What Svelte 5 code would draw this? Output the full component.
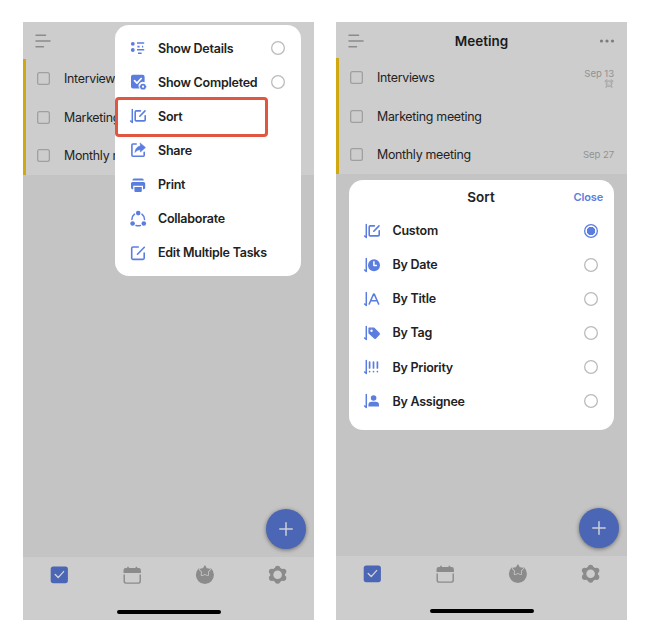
<script>
  const menu = [
    { icon: 'details', label: 'Show Details', radio: true },
    { icon: 'completed', label: 'Show Completed', radio: true },
    { icon: 'custom', label: 'Sort' },
    { icon: 'share', label: 'Share' },
    { icon: 'print', label: 'Print' },
    { icon: 'collab', label: 'Collaborate' },
    { icon: 'edit', label: 'Edit Multiple Tasks' }
  ];
  const sorts = [
    { icon: 'custom', label: 'Custom', on: true },
    { icon: 'date', label: 'By Date' },
    { icon: 'title', label: 'By Title' },
    { icon: 'tag', label: 'By Tag' },
    { icon: 'priority', label: 'By Priority' },
    { icon: 'assignee', label: 'By Assignee' }
  ];
  const tasks = [
    { name: 'Interviews', date: 'Sep 13', alarm: true },
    { name: 'Marketing meeting' },
    { name: 'Monthly meeting', date: 'Sep 27' }
  ];
  const sortIcons = ['custom', 'date', 'title', 'tag', 'priority', 'assignee'];
  const star = 'M9.900 1l1.500 2.700 3.100.6-2.200 2.200.4 3.100-2.800-1.200-2.800 1.200.4-3.100-2.200-2.200 3.100-.6z';
</script>

{#snippet glyph(name)}
  <svg class="glyph" viewBox="0 0 20 20" width="20" height="20" fill="none" stroke="currentColor" stroke-width="1.6" stroke-linecap="round" stroke-linejoin="round">
    {#if sortIcons.includes(name)}
      <path d="M4.300 3.600V16.400L2.600 15" stroke-width="1.500" />
    {/if}
    {#if name === 'details'}
      <g fill="currentColor" stroke="none"><circle cx="4.8" cy="5.800" r="1.900" /><circle cx="4.8" cy="12" r="1.900" /></g>
      <path d="M9 5h7.200M9.400 8.600h2.200M14 8.600h1.200M9 11.800h7.200M10 15.200h3.600" stroke-width="1.600" stroke-linecap="butt" />
    {:else if name === 'completed'}
      <path d="M5 2.700h9.600a2 2 0 0 1 2 2v5.600a4 4 0 0 0-5 6.100H5a2 2 0 0 1-2-2V4.700a2 2 0 0 1 2-2z" fill="currentColor" stroke="none" />
      <path d="M6.500 8.700l2.400 2.400 4.300-4.600" stroke="#fff" stroke-width="1.700" />
      <circle cx="15" cy="14.700" r="2" stroke-width="1.700" />
      <path d="M12.200 14.700h.5M17.300 14.700h.5" stroke-width="1.400" />
    {:else if name === 'custom'}
      <path d="M12.400 4.900H8.200a1 1 0 0 0-1 1v8a1 1 0 0 0 1 1h8a1 1 0 0 0 1-1V9.800M11.800 10.200L17 4.900" stroke-width="1.600" />
    {:else if name === 'date'}
      <circle cx="12" cy="10.200" r="6" fill="currentColor" stroke="none" />
      <path d="M11.900 6.800v3.800h2.500" stroke="#fff" stroke-width="1.500" />
    {:else if name === 'title'}
      <path d="M7.200 15L11.600 5h.6L16.600 15M8.800 11.800h6.200" stroke-width="1.600" />
    {:else if name === 'tag'}
      <path d="M7 5.200h5l5.200 5.200a.6.6 0 0 1 0 .9l-3.600 3.900a.6.6 0 0 1-.9 0L7 10z" fill="currentColor" stroke-width="1.200" />
      <circle cx="9.500" cy="7.800" r="1.200" fill="#fff" stroke="none" />
    {:else if name === 'priority'}
      <path d="M7.600 5v6M11.500 5v6M15.400 5v6M7.600 14.600h0M11.500 14.600h0M15.400 14.600h0" stroke-width="1.700" />
    {:else if name === 'assignee'}
      <g fill="currentColor" stroke="none"><circle cx="11.600" cy="7" r="2.800" /><path d="M6.400 15.600v-1.500a3.300 3.300 0 0 1 3.300-3.300h4a3.300 3.300 0 0 1 3.300 3.300v1.500z" /></g>
    {:else if name === 'share'}
      <path d="M8.200 4H4.900a1 1 0 0 0-1 1v10.300a1 1 0 0 0 1 1h10.300a1 1 0 0 0 1-1v-3.100" stroke-width="1.600" />
      <path d="M12.400 3.200L17.400 7.600l-5 4.300V9.700c-2.500 0-4.100.8-5.400 2.700.3-3.700 2.200-6 5.400-6.500z" fill="currentColor" stroke-width=".7" />
    {:else if name === 'print'}
      <g fill="currentColor" stroke="none">
        <path d="M6 3.600h8.200a1.500 1.500 0 0 1 1.500 1.500v.4H4.500v-.4A1.500 1.500 0 0 1 6 3.600z" />
        <path d="M4.500 6.900h11.200a1.500 1.500 0 0 1 1.500 1.500v4.400a1.400 1.400 0 0 1-1.400 1.400H15V10.800H5.200v3.400h-.8A1.400 1.400 0 0 1 3 12.800V8.400a1.500 1.500 0 0 1 1.500-1.500z" />
        <path d="M6.400 12h7.400v4a1 1 0 0 1-1 1H7.400a1 1 0 0 1-1-1z" />
      </g>
    {:else if name === 'collab'}
      <path d="M6.500 5.200A6.600 6.600 0 0 0 3.900 10.500M13.900 5.200A6.600 6.600 0 0 1 16.500 10.500M8 16.500a7 7 0 0 0 4.400 0" stroke-width="1.500" />
      <g fill="currentColor" stroke="none"><circle cx="10.200" cy="4.100" r="2.300" /><circle cx="4.600" cy="14.500" r="2.300" /><circle cx="15.800" cy="14.500" r="2.300" /></g>
    {:else if name === 'edit'}
      <path d="M10.300 4H5a1.300 1.300 0 0 0-1.300 1.300v9.800A1.300 1.300 0 0 0 5 16.400h9.900a1.300 1.300 0 0 0 1.300-1.300V10M9.500 11.200L16.300 4.300" stroke-width="1.600" />
    {/if}
  </svg>
{/snippet}

{#snippet phone(kind)}
  <section class="phone {kind}">
    <header>
      <svg class="burger" width="16" height="14" viewBox="0 0 16 14" stroke="#8b8b8b" stroke-width="1.500" stroke-linecap="round"><path d="M1 1.200h9.500M1 7h14M1 12.700h7.500" /></svg>
      {#if kind === 'right'}
        <h1>Meeting</h1>
        <svg class="dots" width="16" height="4" viewBox="0 0 16 4" fill="#7c7c7c"><circle cx="2.500" cy="2" r="1.600" /><circle cx="8" cy="2" r="1.600" /><circle cx="13.500" cy="2" r="1.600" /></svg>
      {/if}
    </header>
    <ul class="tasks">
      {#each tasks as t}
        <li>
          <i class="box"></i><span class="name">{t.name}</span>
          {#if kind === 'right' && t.date}
            <span class="meta" class:alarmed={t.alarm}>
              {t.date}
              {#if t.alarm}
                <svg width="10" height="9" viewBox="0 0 10 9" fill="none" stroke="#a9a9a9" stroke-linecap="round"><circle cx="5" cy="4.700" r="2.900" fill="#bdbdbd" stroke-width="1" /><path d="M1.200 2.400L2.900 1M8.800 2.400L7.100 1M2.600 7.500l-.5.7M7.400 7.500l.5.700" stroke-width="1.400" /><path d="M5 3.200v1.700h1" stroke="#d6d6d6" stroke-width=".8" /></svg>
              {/if}
            </span>
          {/if}
        </li>
      {/each}
    </ul>
    <div class="blank">
      <button class="fab" aria-label="Add"><svg width="14" height="14" viewBox="0 0 14 14" stroke="#cdcfd8" stroke-width="1.500" stroke-linecap="round"><path d="M7 .8v12.400M.8 7h12.400" /></svg></button>
    </div>
    <footer>
      <nav>
        <svg width="20" height="20" viewBox="0 0 20 20"><rect x="1.700" y="1.400" width="17.200" height="16.800" rx="2.600" fill="#4a66b4" /><path d="M6.200 9.600l3 3 5.400-6" fill="none" stroke="#d0d2d8" stroke-width="1.400" stroke-linecap="round" stroke-linejoin="round" /></svg>
        <svg width="20" height="20" viewBox="0 0 20 20" fill="none" stroke="#8b8b8b"><path d="M6 1.700v2M14.400 1.700v2" stroke-width="1.600" /><path d="M1.500 8V5.200a2.200 2.200 0 0 1 2.200-2.200h13a2.200 2.200 0 0 1 2.200 2.200V8z" fill="#8b8b8b" stroke="none" /><path d="M2.200 9.500v6.800a1.800 1.800 0 0 0 1.800 1.800h12.400a1.800 1.800 0 0 0 1.800-1.800V9.500" stroke-width="1.400" /></svg>
        <svg width="20" height="20" viewBox="0 0 20 20" fill="#8b8b8b"><path d="M3.900 3.300A9 9 0 1 0 15.900 3.300z" /><path d={star} fill="#cdcdcd" stroke="#cdcdcd" stroke-width="2.700" stroke-linejoin="round" /><path d={star} stroke="#8b8b8b" stroke-width="1.200" stroke-linejoin="round" /></svg>
        <svg width="20" height="20" viewBox="0 0 20 20" fill="#8b8b8b"><circle cx="9.600" cy="9.800" r="7.400" /><circle cx="9.600" cy="3.500" r="2.700" /><circle cx="9.600" cy="16.100" r="2.700" /><circle cx="3.700" cy="6.500" r="2.800" /><circle cx="15.500" cy="6.500" r="2.800" /><circle cx="3.700" cy="13.100" r="2.800" /><circle cx="15.500" cy="13.100" r="2.800" /><circle cx="9.600" cy="9.800" r="4.300" fill="#cdcdcd" /></svg>
      </nav>
      <div class="home"></div>
    </footer>

    {#if kind === 'left'}
      <div class="menu">
        {#each menu as m}
          <div class="row">{@render glyph(m.icon)}<span>{m.label}</span>{#if m.radio}<i class="radio"></i>{/if}</div>
        {/each}
        <div class="highlight"></div>
      </div>
    {:else}
      <div class="sheet">
        <div class="sheet-head"><h2>Sort</h2><span class="close">Close</span></div>
        {#each sorts as s}
          <div class="row">{@render glyph(s.icon)}<span>{s.label}</span><i class="radio" class:on={s.on}></i></div>
        {/each}
      </div>
    {/if}
  </section>
{/snippet}

<main>
  {@render phone('left')}
  {@render phone('right')}
</main>

<style>
  :global(body) { background: #fff; }
  main {
    box-sizing: border-box;
    width: 650px;
    height: 642px;
    padding: 22px 23px;
    display: flex;
    justify-content: space-between;
    font-family: Inter, "Liberation Sans", sans-serif;
    color: #222;
    background: #fff;
  }
  .phone {
    position: relative;
    width: 291px;
    height: 598px;
    display: flex;
    flex-direction: column;
    background: #cdcdcd;
  }
  header {
    height: 36.5px;
    display: flex;
    align-items: center;
    justify-content: space-between;
    padding: 2px 12px 0;
    box-sizing: border-box;
    flex: none;
  }
  .right header { height: 35.5px; padding-top: 1.500px; }
  h1, h2 { margin: 0; line-height: 18px; font-weight: 600; font-size: 13.500px; }
  h1 { color: #1a1a1a; }
  .tasks {
    margin: 0;
    padding: 0;
    list-style: none;
    border-left: 3px solid #cfa90f;
    flex: none;
  }
  .tasks li {
    box-sizing: border-box;
    height: 38.900px;
    display: flex;
    align-items: center;
    padding: .400px 13px 0 11px;
    font-size: 12.400px;
    letter-spacing: -.29px;
  }
  .name { white-space: nowrap; }
  .box {
    width: 13px;
    height: 13px;
    box-shadow: inset 0 0 0 1.300px #a0a0a0;
    border-radius: 2.500px;
    margin-right: 14px;
    flex: none;
  }
  .meta {
    margin-left: auto;
    font-size: 9.600px;
    letter-spacing: -.08px;
    line-height: 11px;
    color: #929292;
    display: flex;
    flex-direction: column;
    align-items: flex-end;
  }
  .meta svg { margin: -.500px 0 0; }
  .alarmed { padding-top: 2px; }
  .blank {
    flex: 1;
    background: #c4c4c4;
    display: flex;
    align-items: flex-end;
    justify-content: flex-end;
    padding: 0 8px 8px;
  }
  .fab {
    width: 40px;
    height: 40px;
    border: 0;
    border-radius: 50%;
    background: #4a66b4;
    display: grid;
    place-items: center;
    padding: 0;
    box-shadow: 0 1px 4px rgba(0, 0, 0, .45);
  }
  footer { height: 63.500px; flex: none; display: flex; flex-direction: column; align-items: center; }
  .right footer { height: 64.500px; }
  nav { width: 100%; display: flex; height: 37px; }
  nav svg { width: 20px; margin: 8.500px 26.375px 0; flex: none; }
  .home { width: 104px; height: 4px; border-radius: 2px; background: #000; margin-top: 16.700px; }
  .menu, .sheet { position: absolute; background: #fff; box-sizing: border-box; }
  .menu { left: 91.500px; top: 2.500px; width: 186.500px; height: 251.500px; border-radius: 14px; padding: 6.500px 16.500px 0 13px; }
  .sheet { left: 13px; top: 157.500px; width: 265px; height: 250px; border-radius: 14px; padding: 6px 16px 0 13px; }
  .row { height: 34.150px; display: flex; align-items: center; font-size: 12.500px; font-weight: 600; letter-spacing: -.25px; }
  .glyph { color: #5b7de0; margin-right: 10.500px; flex: none; }
  .row span { white-space: nowrap; }
  .radio {
    margin-left: auto;
    width: 14px;
    height: 14px;
    border-radius: 50%;
    box-shadow: inset 0 0 0 1.300px #bbb;
  }
  .radio.on { box-shadow: inset 0 0 0 1.300px #5b7de0; background: radial-gradient(circle, #5b7de0 3.900px, transparent 4.500px); }
  .highlight {
    position: absolute;
    left: 0;
    top: 72.500px;
    width: 153px;
    height: 40px;
    box-sizing: border-box;
    border: 3px solid #e05640;
    border-radius: 4px;
  }
  .sheet-head { display: grid; grid-template-columns: 1fr auto 1fr; align-items: center; height: 28px; margin: 0 -5px 0 -3px; line-height: 22px; }
  .sheet-head h2 { grid-column: 2; padding-bottom: 6px; }
  .close { grid-column: 3; justify-self: end; font-size: 11px; font-weight: 600; letter-spacing: -.15px; color: #5b7de0; padding-bottom: 5px; }
</style>
